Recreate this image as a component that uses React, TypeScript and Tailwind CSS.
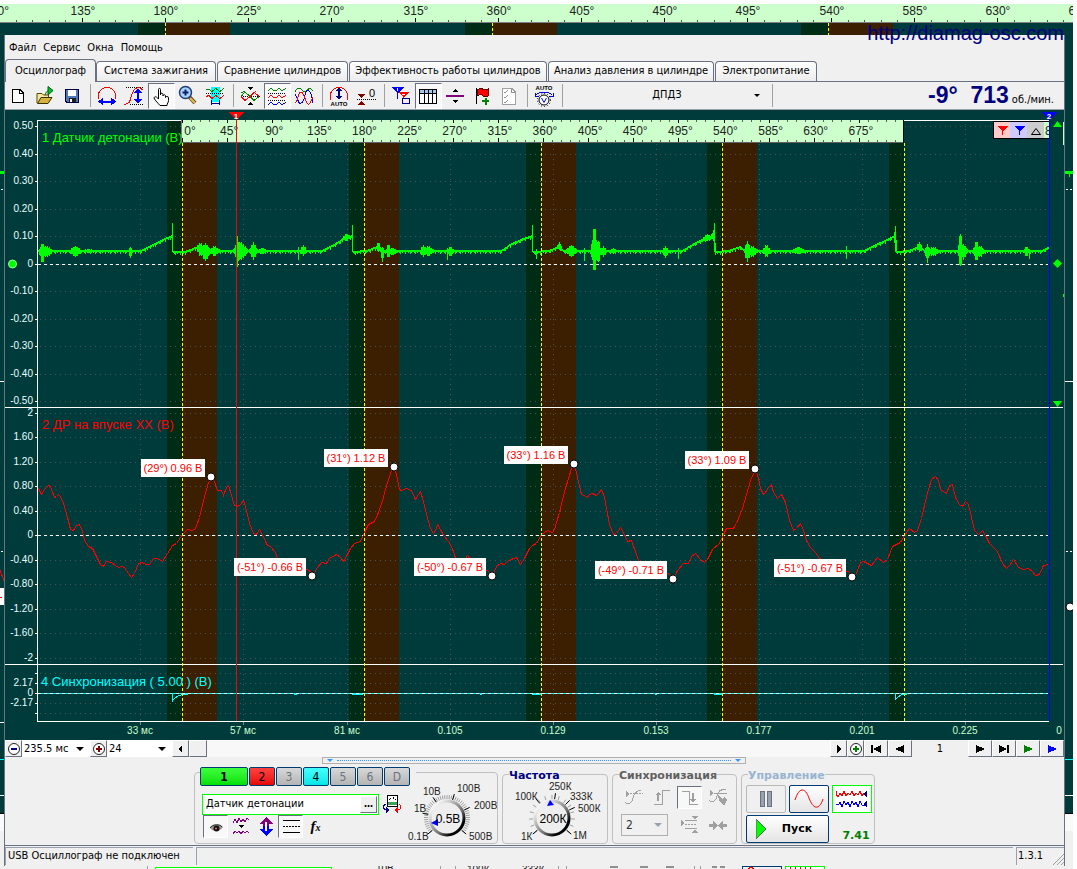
import React from 'react';

type Point = [number, number];

const BANDS = [182, 364, 541, 722, 904];
const GRID_X = [140, 243, 347, 450, 553, 656, 759, 862, 965];
const TIME_LABELS = ['33 мс', '57 мс', '81 мс', '0.105', '0.129', '0.153', '0.177', '0.201', '0.225'];

const AXIS_1: [string, number][] = [
  ['0.50', 126], ['0.40', 154], ['0.30', 181], ['0.20', 209], ['0.10', 236], ['0', 264],
  ['-0.10', 291], ['-0.20', 319], ['-0.30', 346], ['-0.40', 374], ['-0.50', 401],
];
const AXIS_2: [string, number][] = [
  ['2', 413], ['1.60', 437], ['1.20', 462], ['0.80', 486], ['0.40', 511], ['0', 535],
  ['-0.40', 560], ['-0.80', 584], ['-1.20', 609], ['-1.60', 633], ['-2', 658],
];
const AXIS_3: [string, number][] = [['', 673], ['2.17', 683], ['0', 693], ['-2.17', 703], ['', 713]];

const MARKERS = [
  { x: 211, y: 477, lx: 141, ly: 459, w: 64, text: '(29°) 0.96 В' },
  { x: 312, y: 576, lx: 234, ly: 558, w: 72, text: '(-51°) -0.66 В' },
  { x: 394, y: 467, lx: 324, ly: 449, w: 64, text: '(31°) 1.12 В' },
  { x: 492, y: 576, lx: 414, ly: 558, w: 72, text: '(-50°) -0.67 В' },
  { x: 574, y: 464, lx: 504, ly: 446, w: 64, text: '(33°) 1.16 В' },
  { x: 673, y: 579, lx: 595, ly: 561, w: 72, text: '(-49°) -0.71 В' },
  { x: 755, y: 469, lx: 685, ly: 451, w: 64, text: '(33°) 1.09 В' },
  { x: 852, y: 577, lx: 774, ly: 559, w: 72, text: '(-51°) -0.67 В' },
];

// centre line of the knock sensor signal
const KNOCK: Point[] = [
  [38, 251], [141, 251], [152, 245], [162, 240], [172, 236], [173, 252], [184, 252], [198, 247], [203, 251],
  [322, 251], [335, 244], [345, 238], [352, 236], [353, 252], [366, 251], [377, 247], [382, 251],
  [501, 251], [511, 244], [523, 239], [532, 236], [533, 252], [548, 251], [559, 247], [563, 251],
  [682, 251], [697, 242], [714, 236], [715, 252], [728, 251], [740, 247], [744, 251],
  [863, 251], [880, 243], [895, 236], [896, 252], [908, 251], [919, 247], [924, 251], [1041, 251], [1048, 248],
];

// [x, top, bottom, half width]
const BURSTS: [number, number, number, number][] = [
  [42, 243, 263, 4], [46, 246, 257, 8], [75, 246, 257, 7], [88, 249, 253, 9], [130, 246, 259, 2],
  [172, 223, 252, 1], [200, 243, 256, 5], [205, 243, 261, 6], [214, 246, 256, 7],
  [237, 236, 267, 3], [240, 242, 260, 9], [253, 242, 260, 5], [262, 248, 254, 8], [298, 247, 260, 1], [303, 245, 256, 4],
  [346, 234, 241, 6], [352, 225, 252, 1], [378, 242, 252, 3], [382, 246, 263, 2], [388, 244, 258, 3], [392, 248, 255, 8],
  [423, 245, 257, 4], [428, 246, 256, 7], [447, 248, 260, 1], [450, 247, 256, 5], [532, 225, 252, 1], [536, 249, 259, 1],
  [559, 242, 250, 3], [571, 245, 257, 7], [584, 248, 261, 1], [594, 227, 272, 4], [598, 240, 263, 3], [603, 246, 257, 4],
  [613, 248, 254, 6], [665, 246, 258, 4], [678, 248, 259, 1], [707, 234, 241, 7], [713, 230, 241, 3], [714, 223, 252, 1],
  [747, 241, 262, 4], [752, 246, 257, 7], [766, 245, 257, 5], [798, 247, 254, 9], [846, 246, 259, 1],
  [895, 226, 252, 2], [919, 242, 252, 4], [927, 244, 263, 3], [933, 247, 256, 8],
  [960, 232, 268, 3], [963, 244, 260, 5], [976, 241, 261, 4], [980, 246, 257, 5], [1026, 246, 256, 4], [1029, 249, 259, 1],
];

const PRESSURE: Point[] = [
  [38, 488], [41, 494], [44, 489], [48, 485], [50, 486], [54, 497], [56, 496], [58, 494], [60, 496], [63, 503], [67, 517], [70, 529],
  [73, 530], [76, 525], [79, 524], [82, 531], [84, 540], [88, 546], [92, 548], [97, 558], [100, 564], [103, 566],
  [106, 561], [111, 562], [115, 565], [118, 567], [121, 566], [124, 567], [128, 573], [131, 577], [134, 573],
  [138, 563], [142, 562], [145, 564], [149, 564], [153, 558], [157, 558], [162, 561], [167, 553], [172, 545],
  [176, 543], [182, 534], [187, 529], [192, 530], [195, 528], [199, 517], [203, 500], [208, 482], [211, 477],
  [214, 481], [217, 490], [221, 490], [223, 495], [226, 487], [228, 485], [231, 495], [234, 505], [237, 506],
  [240, 504], [243, 500], [245, 506], [249, 523], [253, 533], [256, 534], [259, 529], [261, 532], [265, 541],
  [267, 545], [270, 546], [275, 552], [277, 558], [290, 563], [300, 567], [309, 570], [312, 576], [317, 567],
  [321, 562], [326, 563], [329, 558], [336, 554], [340, 557], [343, 561], [346, 556], [350, 548], [354, 543],
  [360, 541], [365, 530], [368, 524], [374, 521], [378, 512], [382, 500], [387, 482], [391, 470], [394, 467],
  [396, 474], [399, 489], [401, 490], [406, 488], [411, 490], [415, 499], [418, 494], [420, 491], [423, 501],
  [426, 514], [430, 528], [433, 533], [435, 530], [437, 524], [440, 529], [443, 535], [448, 541], [451, 546],
  [454, 554], [455, 558], [463, 562], [467, 555], [471, 560], [480, 566], [488, 571], [492, 576], [496, 566],
  [500, 563], [504, 564], [508, 560], [516, 557], [520, 564], [524, 558], [529, 548], [532, 545], [536, 543],
  [541, 534], [547, 530], [552, 532], [554, 529], [559, 512], [565, 488], [571, 468], [574, 464], [577, 477],
  [581, 494], [584, 495], [587, 497], [589, 494], [592, 493], [596, 495], [598, 493], [601, 489], [604, 497],
  [609, 524], [613, 534], [616, 533], [620, 527], [623, 532], [627, 541], [631, 540], [635, 551], [638, 560],
  [646, 566], [650, 561], [660, 570], [668, 573], [673, 579], [677, 570], [683, 563], [688, 563], [691, 556],
  [695, 553], [700, 559], [704, 562], [707, 559], [712, 549], [719, 543], [723, 534], [726, 528], [733, 528],
  [736, 523], [742, 508], [750, 480], [755, 469], [758, 478], [760, 488], [763, 494], [765, 492], [768, 487],
  [771, 484], [773, 492], [777, 498], [781, 494], [785, 502], [789, 520], [793, 530], [796, 528], [800, 523],
  [803, 530], [806, 540], [810, 547], [815, 552], [819, 558], [830, 564], [840, 570], [848, 571], [852, 577],
  [856, 573], [860, 562], [863, 561], [871, 565], [877, 557], [883, 562], [887, 559], [892, 546], [900, 542],
  [904, 535], [909, 528], [914, 532], [917, 530], [921, 518], [926, 496], [931, 479], [935, 476], [938, 480],
  [940, 489], [946, 493], [949, 485], [952, 484], [955, 497], [959, 504], [962, 506], [965, 501], [968, 504],
  [971, 517], [974, 530], [978, 534], [982, 530], [985, 535], [989, 543], [997, 551], [1002, 563], [1006, 568],
  [1010, 564], [1013, 559], [1018, 567], [1023, 569], [1028, 568], [1032, 571], [1035, 575], [1039, 574],
  [1043, 565], [1048, 564],
];

const centreAt = (x: number) => {
  for (let i = 1; i < KNOCK.length; i++) {
    const [x1, y1] = KNOCK[i];
    if (x <= x1) {
      const [x0, y0] = KNOCK[i - 1];
      return y0 + ((y1 - y0) * (x - x0)) / (x1 - x0);
    }
  }
  return 251;
};

const knockPath = () => {
  let d = '';
  for (let x = 38; x <= 1048; x++) {
    const c = centreAt(x);
    let top = c - 1;
    let bottom = c + 1 + (x % 5 === 0 ? 2 : x % 3 === 0 ? 1 : 0);
    BURSTS.forEach(([bx, t, b, w]) => {
      const k = 1 - Math.abs(x - bx) / w;
      if (k <= 0) return;
      const soft = Math.min(1, k * (x % 2 ? 1.2 : 0.9));
      top = Math.min(top, c - (c - t) * (w === 1 ? 1 : soft));
      bottom = Math.max(bottom, c + (b - c) * (w === 1 ? 1 : soft));
    });
    d += `M${x} ${Math.round(top)}h1V${Math.round(bottom)}h-1z`;
  }
  return d;
};

const toLine = (pts: Point[]) => pts.map(([x, y]) => `${x + 0.5},${y + 0.5}`).join(' ');

/* ---------- other copy of the program behind the window ---------- */

const Backdrop = () => {
  const labels = [90, 135, 180, 225, 270, 315, 360, 405, 450, 495, 540, 585, 630, 675];
  return (
    <svg viewBox="0 4 1073 865" className="absolute inset-x-0 top-0 w-full" shapeRendering="crispEdges" aria-hidden="true">
      <rect x="0" y="4" width="1073" height="865" fill="#f0f0f0" />
      <rect x="0" y="22" width="1073" height="792" fill="#003b3b" />
      <rect x="0" y="814" width="1073" height="17" fill="#fafafa" />
      <rect x="0" y="4" width="1073" height="18" fill="#ccffcc" />
      {[165, 492, 828].map((x) => (
        <g key={x}>
          <rect x={x - 27} y="23" width="27" height="13" fill="#002b14" />
          <rect x={x} y="23" width="65" height="13" fill="#3c1e00" />
          <path d={`M${x + 0.5} 23V36`} stroke="#ffff00" strokeDasharray="3 2" />
        </g>
      ))}
      <rect x="0" y="22" width="1073" height="1" fill="#808080" />
      {labels.map((deg, i) => {
        const x = Math.round(-1.5 + i * 83.2);
        return (
          <g key={deg}>
            <path d={`M${x + 0.5} 18V22`} stroke="#000" />
            {[1, 2, 3, 4].map((n) => (
              <path key={n} d={`M${Math.round(x + n * 16.6) + 0.5} 20V22`} stroke="#555" />
            ))}
            <text x={x + 1} y="15" fontSize="12" textAnchor="middle" fill="#222">{deg}°</text>
          </g>
        );
      })}
      <g fill="#00ff00">
        <rect x="0" y="171" width="4" height="3" />
        <rect x="1065" y="171" width="8" height="3" />
        <rect x="1069" y="174" width="1" height="3" />
      </g>
      <g fill="#fff">
        <rect x="1" y="189" width="2" height="1" />
        <rect x="1066" y="189" width="2" height="1" />
        <rect x="1070" y="189" width="2" height="1" />
        <rect x="0" y="381" width="4" height="1" />
        <rect x="1065" y="381" width="8" height="1" />
        <rect x="1" y="551" width="2" height="1" />
        <rect x="1066" y="551" width="2" height="1" />
        <rect x="1070" y="551" width="2" height="1" />
        <rect x="0" y="588" width="4" height="17" />
        <rect x="0" y="722" width="4" height="1" />
        <rect x="0" y="795" width="4" height="1" />
        <rect x="1065" y="795" width="8" height="1" />
      </g>
      <path d="M0 570L4 581M0 597.5H2" stroke="#f00" fill="none" />
      <rect x="0" y="759" width="4" height="1" fill="#00ffff" />
      <rect x="1065" y="759" width="8" height="1" fill="#00ffff" />
      <rect x="0" y="813" width="4" height="1" fill="#000" />
      <rect x="1065" y="813" width="8" height="1" fill="#000" />
      <circle cx="1070" cy="607" r="4" fill="#fff" stroke="#000" shapeRendering="auto" />
      <rect x="155.5" y="867.5" width="176" height="6" fill="#fff" stroke="#00ff00" />
      <path d="M147.5 866V869M440.5 866V869M455.5 866V869M558.5 866V869M566.5 866V869M694.5 866V869M700.5 866V869" stroke="#a0a0a0" />
      <path d="M742.5 869V866.5H781.5V869" stroke="#003c74" fill="none" />
      <path d="M785.5 869V866.5H824.5V869" stroke="#00ff00" fill="#fff" />
      <path d="M748 869l3-2 3 2M790 867v2m5-2v2m5-2v2m5-2v2m5-2v2" stroke="#f00" fill="none" />
      <path d="M610 867h8m22 0h8m18 0h8m38 0h5m3 0h5" stroke="#909090" strokeWidth="2" />
      <g fontSize="10" fill="#222">
        <text x="376" y="872">10В</text>
        <text x="467" y="873">100К</text>
        <text x="522" y="873">333К</text>
      </g>
    </svg>
  );
};

/* ---------- plot ---------- */

const Axis = ({ rows }: { rows: [string, number][] }) => (
  <>
    {rows.map(([label, y]) => (
      <g key={y}>
        <path d={`M35 ${y + 0.5}H38`} stroke="#fff" />
        <text x="33" y={y + 3} fontSize="10" textAnchor="end" fill="#e8ffff">{label}</text>
      </g>
    ))}
  </>
);

const Ruler = () => {
  const step = 722 / 16;
  const ticks = Array.from({ length: 80 }, (_, i) => i);
  return (
    <g>
      <rect x="181" y="120" width="723" height="23" fill="#ccffcc" />
      <rect x="181" y="120" width="1" height="23" fill="#808080" />
      <rect x="181" y="142" width="723" height="1" fill="#606060" />
      <rect x="903" y="120" width="1" height="23" fill="#000" />
      {ticks.map((i) => {
        const x = Math.round(182 + (i * step) / 5) + 0.5;
        const major = i % 5 === 0;
        return <path key={i} d={major ? `M${x} 120v3M${x} 138v4` : `M${x} 120v2M${x} 140v2`} stroke={major ? '#000' : '#606060'} />;
      })}
      {Array.from({ length: 16 }, (_, i) => (
        <text key={i} x={i === 0 ? 190 : 184 + i * step} y="135" fontSize="12" textAnchor="middle" fill="#222">{i * 45}°</text>
      ))}
    </g>
  );
};

const Plot = () => (
  <svg viewBox="5 110 1059 630" className="block w-full bg-[#003b3b]" shapeRendering="crispEdges" role="img" aria-label="Осциллограмма">
    {BANDS.map((x, i) => (
      <g key={x}>
        <rect x={x - 15} y="121" width="15" height="600" fill="#002b14" />
        {i < 4 && <rect x={x} y="121" width="35" height="600" fill="#3c1e00" />}
      </g>
    ))}

    <g stroke="#4a5252" strokeDasharray="1 4" fill="none">
      {[...AXIS_1, ...AXIS_2, ...AXIS_3].map(([, y]) => <path key={y} d={`M40 ${y + 0.5}H1048`} />)}
      {GRID_X.map((x) => <path key={x} d={`M${x + 0.5} 124V720`} />)}
    </g>
    <g stroke="#808080">
      {GRID_X.map((x) => <path key={x} d={`M${x + 0.5} 722V725`} />)}
    </g>

    <g stroke="#fff" strokeDasharray="3 3">
      <path d="M38 264.5H1048" />
      <path d="M38 535.5H1048" />
    </g>
    <path d="M37.5 721V120.5H1049M37 721.5H1049" stroke="#fff" fill="none" />
    <path d="M5 407.5H1063M5 664.5H1063" stroke="#fff" />
    <Axis rows={AXIS_1} />
    <Axis rows={AXIS_2} />
    <Axis rows={AXIS_3} />

    <path d={knockPath()} fill="#00ff00" />
    <polyline points={toLine(PRESSURE)} fill="none" stroke="#ff0000" />
    <path d="M38 693.5H1048" stroke="#00ffff" />
    <path d="M38 693.5H1048" stroke="#fff" strokeDasharray="3 3" />
    <path
      d="M172.5 693V701L174 699L177 696.5L182 694.5H188M352 694.5H363M294 694.5h3M532 694.5H541M714 694.5H723M895.5 693V699L898 697L902 694.5H907M480 694.5h2M655 694.5h2"
      stroke="#00ffff" fill="none"
    />

    {BANDS.map((x) => <path key={x} d={`M${x + 0.5} 143V721`} stroke="#ffff00" strokeDasharray="3 2" />)}

    <text x="42" y="142" fontSize="13" fill="#00ff00">1 Датчик детонации (В)</text>
    <text x="42" y="429" fontSize="13" fill="#ff0000">2 ДР на впуске ХХ (В)</text>
    <text x="41" y="686" fontSize="13" fill="#00ffff">4 Синхронизация ( 5.00 ) (В)</text>

    <Ruler />

    <path d="M236.5 119V721" stroke="#ff0000" />
    <path d="M229 112H244L236.5 120Z" fill="#ff0000" />
    <text x="236" y="119" fontSize="8" fontWeight="bold" textAnchor="middle" fill="#fff">1</text>

    <rect x="993.5" y="121.5" width="56" height="17" fill="#ccffcc" stroke="#000" />
    <rect x="994" y="122" width="16" height="16" fill="#ffcccc" />
    <rect x="1010" y="122" width="17" height="16" fill="#ccccff" />
    <rect x="1027" y="122" width="17" height="16" fill="#cccccc" />
    <path d="M997 126H1008L1003 131V135H1002V131Z" fill="#ff0000" />
    <path d="M1014 126H1025L1020 131V135H1019V131Z" fill="#0000ff" />
    <path d="M1031.5 134.5H1040.5L1036 128.5Z" fill="none" stroke="#000" shapeRendering="auto" />
    <text x="1045" y="135" fontSize="12" fill="#222">8</text>
    <rect x="1050" y="121" width="13" height="18" fill="#003b3b" />
    <path d="M1049.5 119V721" stroke="#0000ff" />
    <path d="M1042 112H1057L1049.5 120Z" fill="#0000ff" />
    <text x="1049" y="119" fontSize="8" fontWeight="bold" textAnchor="middle" fill="#fff">2</text>

    <g fill="#00ff00" shapeRendering="auto">
      <path d="M1053 127H1062L1057.5 121Z" />
      <path d="M1053 401H1062L1057.5 407Z" />
      <path d="M1057.5 259L1062 263.5L1057.5 268L1053 263.5Z" />
      <circle cx="12.5" cy="264" r="4" stroke="#9f9" />
    </g>
    <rect x="1063" y="122" width="1" height="23" fill="#ccffcc" />
    <rect x="1063" y="294" width="1" height="3" fill="#00ff00" />

    {MARKERS.map((m) => (
      <g key={m.x}>
        <rect x={m.lx} y={m.ly} width={m.w} height="18" fill="#fff" />
        <text x={m.lx + m.w / 2} y={m.ly + 13} fontSize="11" textAnchor="middle" fill="#ff0000">{m.text}</text>
        <circle cx={m.x} cy={m.y} r="4" fill="#fff" stroke="#000" shapeRendering="auto" />
      </g>
    ))}

    <g fontSize="10" textAnchor="middle" fill="#ccffcc">
      {TIME_LABELS.map((t, i) => <text key={t} x={GRID_X[i]} y="734">{t}</text>)}
      <text x="1059" y="734">0</text>
    </g>
  </svg>
);

/* ---------- toolbar ---------- */

const Icon = ({ children, smooth }: { children: React.ReactNode; smooth?: boolean }) => (
  <svg viewBox="0 0 22 22" width="22" height="22" fill="none" className="shrink-0" shapeRendering={smooth ? 'auto' : 'crispEdges'} aria-hidden="true">
    {children}
  </svg>
);

const ToolButton = ({ label, pressed, children }: { label: string; pressed?: boolean; children: React.ReactNode }) => (
  <button
    type="button"
    aria-label={label}
    className={`flex h-[26px] w-[27px] shrink-0 items-center justify-center border pr-px ${
      pressed ? 'border-t-gray-500 border-l-gray-500 border-r-white border-b-white bg-[#f8f8f8]' : 'border-transparent'
    }`}
  >
    {children}
  </button>
);

const Separator = () => (
  <span className="flex w-2 shrink-0 justify-center">
    <span className="h-[23px] w-px bg-[#a0a0a0]" />
  </span>
);

const Toolbar = () => (
  <div className="flex h-7 items-center border-b border-gray-400 bg-[#f0f0f0]">
    <ToolButton label="Новый">
      <Icon><path d="M5.5 4.5H13L16.5 8V17.5H5.5Z" fill="#fff" stroke="#000" /><path d="M12.5 5V8.5H16" stroke="#000" /></Icon>
    </ToolButton>
    <ToolButton label="Открыть">
      <Icon smooth>
        <path d="M3 18V8.5H8L9.5 10H14.5V12" fill="#f5e6a0" stroke="#5a4a00" />
        <path d="M3.5 18.5L7 12.5H18L14 18.5Z" fill="#d8b040" stroke="#3a3000" />
        <path d="M14 1.5V10L19 5.5Z" fill="#00c030" stroke="#006000" />
        <path d="M11 10C12 7 13 6 14 6" stroke="#006000" />
      </Icon>
    </ToolButton>
    <ToolButton label="Сохранить">
      <Icon>
        <path d="M4.5 4.5H17.5V17.5H6L4.5 16Z" fill="#5078b8" stroke="#000040" />
        <rect x="7" y="5" width="8" height="6" fill="#fff" />
        <rect x="8" y="13" width="7" height="4" fill="#202020" />
        <rect x="9" y="14" width="2" height="3" fill="#fff" />
      </Icon>
    </ToolButton>
    <Separator />
    <ToolButton label="Период">
      <Icon>
        <path d="M2.5 14V9C3 5 7 2.5 11 2.5S19 5 19.5 9V14" stroke="#f00" />
        <path d="M6 16.5H16" stroke="#0000ff" strokeWidth="2" />
        <path d="M2 16.5L7 12.5V20.5ZM20 16.5L15 12.5V20.5Z" fill="#0000ff" />
      </Icon>
    </ToolButton>
    <ToolButton label="Амплитуда">
      <Icon>
        <path d="M3 2.5H20M7 19.5H20" stroke="#000" strokeDasharray="1 1" />
        <path d="M1 19.5C8 19 7 14 9 9S12 3 16 2.5L20 5" stroke="#f00" />
        <path d="M15 6V16" stroke="#0000ff" strokeWidth="2" />
        <path d="M15 3L19 8H11ZM15 19L19 14H11Z" fill="#0000ff" />
      </Icon>
    </ToolButton>
    <ToolButton label="Рука" pressed>
      <Icon smooth>
        <path
          d="M8.5 14V4.5C8.500 3 10.5 3 10.5 4.5V10V9C11 7.5 13 8 13 9.5V11C13.5 9 15.5 9.5 15.5 11V12.5C16 11 18.5 11 18.5 13V15.5C18.5 18 17 18 17 20.5H10C8 18 5.5 16 4 13C4.5 11 6.5 11.5 8.5 14"
          fill="#fff" stroke="#000"
        />
      </Icon>
    </ToolButton>
    <ToolButton label="Масштаб">
      <Icon smooth>
        <path d="M12.5 12L18 18" stroke="#6a4a10" strokeWidth="4" />
        <path d="M13 13L18 18" stroke="#e0c060" strokeWidth="2" />
        <circle cx="8.5" cy="7.5" r="6" fill="#a8d4ff" stroke="#203c70" strokeWidth="1.5" />
        <path d="M8.5 4.5V10.5M5.5 7.5H11.5" stroke="#102060" strokeWidth="2" />
      </Icon>
    </ToolButton>
    <ToolButton label="Участок">
      <Icon>
        <rect x="7" y="2" width="9" height="15" fill="#00ffff" />
        <path d="M2 4.5H5L8 6.5L12 3.5L16 6.5L20 3.5" stroke="#008000" />
        <path d="M2 8.5H20" stroke="#000" strokeDasharray="1 1" />
        <path d="M2 11.5L5 10.5L8 13.5L12 10.5L16 13.5L20 10.5" stroke="#f00" />
        <path d="M7.5 15V20M15.5 15V20M8 18.5H15" stroke="#000080" />
      </Icon>
    </ToolButton>
    <Separator />
    <ToolButton label="Совместить">
      <Icon>
        <path d="M8 2H14L11 5ZM8 20H14L11 17Z" fill="#000" />
        <path d="M2 11.5H21" stroke="#000" strokeDasharray="1 1" />
        <path d="M2 11.5L6 7L11 11.5L15 15.5L20 11.5M2 8L5 6.500L11 11.5" stroke="#008000" />
        <path d="M2 11.5L6 15.5L11 11.5L15 7L20 11.5M11 11.5L17 6" stroke="#f00" />
      </Icon>
    </ToolButton>
    <ToolButton label="Разнести" pressed>
      <Icon>
        <path d="M2 5.5L5 3.5L8 5.5H10L13 3.5L16 5.5L20 3.5" stroke="#008000" />
        <path d="M2 8.5H20M2 15.5H20" stroke="#000" strokeDasharray="1 1" />
        <path d="M2 12.5L5 10.5L8 12.5H10L13 10.5L16 12.5L20 10.5" stroke="#f00" />
        <path d="M2 19.5L5 17.5L8 19.5H10L13 17.5L16 19.5L20 17.5" stroke="#00f" />
      </Icon>
    </ToolButton>
    <ToolButton label="Наложить">
      <Icon>
        <path d="M2 6.5C5 1 7 3 10 6S15 3 17 3L20 6" stroke="#008000" />
        <path d="M2 9L6 17.5C8 20 11 16 12 10S16 4 18 9S19 17 20 18" stroke="#00f" />
        <path d="M2 18C5 16 5 7 8 7S12 15 14 18S18 17 20 12" stroke="#f00" />
      </Icon>
    </ToolButton>
    <Separator />
    <ToolButton label="Авто">
      <Icon>
        <path d="M2.5 15V9C3 5 7 2.5 11 2.5S19 5 19.5 9V15" stroke="#f00" />
        <path d="M11 5V13" stroke="#000080" strokeWidth="2" />
        <path d="M11 2L14 6H8ZM11 15L14 11H8Z" fill="#000080" />
        <text x="11" y="21" fontSize="6" fontWeight="bold" textAnchor="middle" fill="#000">AUTO</text>
      </Icon>
    </ToolButton>
    <ToolButton label="Ноль">
      <Icon>
        <path d="M2 14.5H21" stroke="#000" strokeDasharray="1 1" />
        <path d="M3 9H10L6.5 13ZM3 20H10L6.5 16Z" fill="#800000" />
        <text x="17" y="12" fontSize="11" textAnchor="middle" fill="#000">0</text>
      </Icon>
    </ToolButton>
    <Separator />
    <ToolButton label="Маркеры">
      <Icon>
        <path d="M1 2H14L8 8V14H7V8Z" fill="#00f" />
        <path d="M8 7H19L14 12V18H13V12Z" fill="#f00" />
        <path d="M7.5 3V6M12 9.500H15" stroke="#fff" />
        <rect x="12.5" y="13.5" width="7" height="5" fill="#eef" stroke="#000080" />
      </Icon>
    </ToolButton>
    <ToolButton label="Таблица" pressed>
      <Icon>
        <rect x="2.5" y="4.5" width="17" height="14" fill="#fff" stroke="#000" />
        <rect x="3" y="5" width="16" height="3" fill="#a0c8f0" />
        <path d="M3 8.5H19M7.5 5V18M11.5 5V18M15.5 5V18" stroke="#000" />
      </Icon>
    </ToolButton>
    <ToolButton label="Делитель">
      <Icon><path d="M2 11H20" stroke="#800080" strokeWidth="2" /><path d="M8 7H14L11 4ZM8 15H14L11 18Z" fill="#000" /></Icon>
    </ToolButton>
    <ToolButton label="Флажок">
      <Icon>
        <path d="M5.5 3V19" stroke="#000" />
        <path d="M6 5L10 3L13 5L17 4V11L13 12L10 9L6 11Z" fill="#f00" stroke="#600000" />
        <path d="M11 16H18M14.5 13V20" stroke="#008000" strokeWidth="2" />
      </Icon>
    </ToolButton>
    <ToolButton label="Список">
      <Icon>
        <path d="M4.5 3.5H14L17.5 7V19.5H4.5Z" fill="#fff" stroke="#a0a0a0" />
        <path d="M13.5 4V7.5H17M6 7l1 1 3-3M6 12l1 1 3-3M6 17l1 1 3-3" stroke="#909090" />
      </Icon>
    </ToolButton>
    <Separator />
    <ToolButton label="Авторежим">
      <Icon>
        <text x="11" y="5" fontSize="6" fontWeight="bold" textAnchor="middle" fill="#000">AUTO</text>
        <path d="M3 10C7 6 15 6 19 10M2 8V11H6M20 8V11H16" stroke="#0000e0" />
        <g shapeRendering="auto">
          <circle cx="11" cy="15" r="5" fill="#fff" stroke="#000" />
          <circle cx="11" cy="15" r="6.5" stroke="#000" strokeDasharray="1 2" />
          <path d="M8.5 13L11 17.5L13.5 13" stroke="#00f" />
        </g>
      </Icon>
    </ToolButton>
    <Separator />
    <div className="relative flex w-[202px] shrink-0 items-center">
      <select aria-label="Датчик" className="h-6 w-full appearance-none bg-transparent text-center text-[11px]" defaultValue="ДПДЗ">
        <option>ДПДЗ</option>
      </select>
      <span className="pointer-events-none absolute right-2 border-x-[3px] border-t-[3px] border-x-transparent border-t-black" />
    </div>
    <Separator />
    <div className="ml-auto flex items-baseline pr-[10px] whitespace-pre">
      <span className="font-[family-name:'Liberation_Sans',sans-serif] text-[23px] leading-6 font-bold text-[#000080]">-9°  713</span>
      <span className="ml-[3px] text-[11px]">об./мин.</span>
    </div>
  </div>
);

/* ---------- scroll row ---------- */

const NavButton = ({ label, className = '', children }: { label: string; className?: string; children?: React.ReactNode }) => (
  <button
    type="button"
    aria-label={label}
    className={`flex h-[17px] shrink-0 items-center justify-center border border-t-white border-l-white border-r-gray-500 border-b-gray-500 bg-[#f0f0f0] ${className}`}
  >
    {children}
  </button>
);

const Glyph = ({ d, fill = '#000', w = 12 }: { d: string; fill?: string; w?: number }) => (
  <svg viewBox={`0 0 ${w} 10`} width={w} height="10" fill={fill} shapeRendering="crispEdges" aria-hidden="true">
    <path d={d} />
  </svg>
);

const ZoomSign = ({ color, plus }: { color: string; plus?: boolean }) => (
  <svg viewBox="0 0 14 14" width="14" height="14" fill="none" aria-hidden="true" className="shrink-0">
    <circle cx="7" cy="7" r="5.5" fill="#fff" stroke="#222" />
    <path d={plus ? 'M4 7H10M7 4V10' : 'M4 7H10'} stroke={color} strokeWidth="2" />
  </svg>
);

const SmallSelect = ({ label, value, className }: { label: string; value: string; className: string }) => (
  <div className={`relative flex h-[17px] shrink-0 items-center bg-white ${className}`}>
    <select aria-label={label} defaultValue={value} className="w-full appearance-none pl-0.5 text-[11px] leading-4">
      <option>{value}</option>
    </select>
    <span className="pointer-events-none absolute right-[6px] border-x-4 border-t-4 border-x-transparent border-t-black" />
  </div>
);

const ScrollRow = () => (
  <div className="flex h-[17px] items-center bg-[#f8f8f8]">
    <NavButton label="Уменьшить" className="w-[17px]"><ZoomSign color="#000080" /></NavButton>
    <SmallSelect label="Длительность" value="235.5 мс" className="w-[68px]" />
    <NavButton label="Увеличить" className="w-[17px]"><ZoomSign color="#800000" plus /></NavButton>
    <SmallSelect label="Делений" value="24" className="w-[65px]" />
    <NavButton label="Влево" className="w-[17px]"><Glyph w={5} d="M4 1V9L0 5Z" /></NavButton>
    <NavButton label="Ползунок" className="w-[18px]" />
    <span className="flex-1" />
    <NavButton label="Вправо" className="w-[17px]"><Glyph w={5} d="M1 1V9L5 5Z" /></NavButton>
    <NavButton label="Добавить кадр" className="w-[17px]"><ZoomSign color="#008000" plus /></NavButton>
    <NavButton label="Первый" className="w-6"><Glyph d="M1 1H3V9H1ZM11 1V9L4 5.5V4.5Z" /></NavButton>
    <NavButton label="Предыдущий" className="w-6"><Glyph d="M10 1V9L2 5.5V4.5Z" /></NavButton>
    <span className="h-[17px] w-14 bg-[#f0f0f0] text-center text-[11px] leading-[18px]">1</span>
    <NavButton label="Следующий" className="w-6"><Glyph d="M2 1V9L10 5.5V4.5Z" /></NavButton>
    <NavButton label="Последний" className="w-6"><Glyph d="M1 1V9L8 5.5V4.5ZM9 1H11V9H9Z" /></NavButton>
    <NavButton label="Воспроизвести" className="w-6"><Glyph fill="#008000" d="M2 1V9L10 5.5V4.5Z" /></NavButton>
    <NavButton label="Вперёд" className="w-6"><Glyph fill="#0000ff" d="M2 1V9L10 5.5V4.5Z" /></NavButton>
  </div>
);

/* ---------- bottom panel ---------- */

const CHANNELS = [
  { id: '1', style: 'w-12 bg-linear-to-b from-[#3cff3c] to-[#00e000] text-black font-bold' },
  { id: '2', style: 'w-[26px] bg-linear-to-b from-[#ff4040] to-[#e60000] text-black' },
  { id: '3', style: 'w-[26px] bg-linear-to-b from-[#d8d8d8] to-[#b4b4b4] text-gray-500' },
  { id: '4', style: 'w-[26px] bg-linear-to-b from-[#40ffff] to-[#00e6e6] text-black' },
  { id: '5', style: 'w-[26px] bg-linear-to-b from-[#d8d8d8] to-[#b4b4b4] text-gray-500' },
  { id: '6', style: 'w-[26px] bg-linear-to-b from-[#d8d8d8] to-[#b4b4b4] text-gray-500' },
  { id: 'D', style: 'w-[26px] bg-linear-to-b from-[#d8d8d8] to-[#b4b4b4] text-gray-500' },
];

type KnobProps = {
  viewBox: string;
  cx: number;
  cy: number;
  value: string;
  pointer: string;
  dense?: boolean;
  labels: [string, number, number][];
  marks: number[];
  className: string;
};

const Knob = ({ viewBox, cx, cy, value, pointer, dense, labels, marks, className }: KnobProps) => {
  const count = dense ? 44 : 14;
  const at = (deg: number, r: number) => {
    const a = (deg * Math.PI) / 180;
    return `${(cx + r * Math.sin(a)).toFixed(1)} ${(cy - r * Math.cos(a)).toFixed(1)}`;
  };
  const id = `rim-${value}`;
  return (
    <svg viewBox={viewBox} className={className} role="img" aria-label={value}>
      <defs>
        <linearGradient id={id} x1="0" y1="0" x2="1" y2="1">
          <stop offset="0.15" stopColor="#f4f4f4" />
          <stop offset="0.6" stopColor="#707070" />
          <stop offset="0.8" stopColor="#000" />
        </linearGradient>
      </defs>
      {Array.from({ length: count + 1 }, (_, i) => {
        const deg = -130 + (260 * i) / count;
        return <path key={i} d={`M${at(deg, 19)}L${at(deg, 23)}`} stroke="#a0a0a0" />;
      })}
      {marks.map((deg) => <path key={deg} d={`M${at(deg, 19)}L${at(deg, 25)}`} stroke="#000" />)}
      <circle cx={cx} cy={cy} r="17" fill="#eeeeee" stroke={`url(#${id})`} strokeWidth="3" />
      <path d={pointer} fill="#0000ff" />
      <text x={cx + 1} y={cy + 5} fontSize="12" textAnchor="middle" fill="#000">{value}</text>
      <g fontSize="10" fill="#222">
        {labels.map(([t, x, y]) => <text key={t} x={x} y={y}>{t}</text>)}
      </g>
    </svg>
  );
};

const PanelButton = ({ label, pressed, children }: { label: string; pressed?: boolean; children: React.ReactNode }) => (
  <button
    type="button"
    aria-label={label}
    className={`flex h-[23px] w-[25px] items-center justify-center border ${
      pressed ? 'border-t-gray-500 border-l-gray-500 border-r-white border-b-white bg-[#f8f8f8]' : 'border-transparent'
    }`}
  >
    {children}
  </button>
);

const ChannelGroup = () => (
  <div className="mt-[6px] flex h-[72px] w-[304px] shrink-0 rounded border border-[#c0c0c0] pl-[5px]">
    <div className="w-[208px] shrink-0">
      <div className="-mt-[6px] flex w-[216px] gap-px bg-[#f0f0f0]">
        {CHANNELS.map((c) => (
          <button key={c.id} type="button" className={`h-[19px] shrink-0 rounded-xs border border-[#003c74] text-xs leading-4 ${c.style}`}>
            {c.id}
          </button>
        ))}
      </div>
      <div className="mt-[7px] flex items-center gap-0.5 pl-[2px]">
        <div className="flex h-[21px] w-[177px] items-center border border-[#00ff00] bg-white pr-px">
          <input aria-label="Название канала" defaultValue="Датчик детонации" className="min-w-0 flex-1 pl-[3px] text-[11px] outline-none" />
          <button type="button" className="h-[17px] w-[17px] border border-t-white border-l-white border-r-gray-500 border-b-gray-500 bg-[#f0f0f0] text-[10px] leading-[10px] font-bold">…</button>
        </div>
        <button type="button" aria-label="Обмен">
          <Icon>
            <rect x="6.5" y="2.5" width="10" height="11" fill="#fff" stroke="#000" />
            <rect x="7" y="9" width="9" height="3" fill="#40a060" />
            <path d="M8 7L10 5M12 6V4M14 7L15 6" stroke="#000" />
            <path d="M5 11C1 13 2 17 7 17" stroke="#000080" />
            <path d="M9 17L5 14V20Z" fill="#000080" />
            <path d="M18 11C21 13 21 17 16 17" stroke="#f00" />
            <path d="M13 17L17 14V20Z" fill="#f00" />
          </Icon>
        </button>
      </div>
      <div className="flex pl-[3px]">
        <PanelButton label="Показать" pressed>
          <Icon smooth>
            <path d="M5 11C8 7 15 7 18 11C15 16 8 16 5 12Z" fill="#999" />
            <path d="M5 12C8 8 15 8 17 11" stroke="#333" />
            <circle cx="11.5" cy="12.5" r="3" fill="#111" />
            <circle cx="11" cy="12.5" r="1" fill="#f66" />
          </Icon>
        </PanelButton>
        <PanelButton label="Фильтр">
          <Icon>
            <path d="M3 7L5 3L7 7L9 2L11 6L13 3L15 6L17 2L19 4" stroke="#800080" />
            <path d="M8 9H14L11 12Z" fill="#000" />
            <path d="M3 18L5 15L7 17L9 15L11 18L13 15L15 17L17 15L19 17" stroke="#800080" />
          </Icon>
        </PanelButton>
        <PanelButton label="Сдвиг">
          <Icon>
            <path d="M11 1L18 8H14V11H8V8H4Z" fill="#800080" />
            <path d="M11 20L18 13H14V10H8V13H4Z" fill="#0000ff" />
            <path d="M11 6V15" stroke="#fff" strokeWidth="2" />
          </Icon>
        </PanelButton>
        <PanelButton label="Линии" pressed>
          <Icon>
            <path d="M3 4.5H20M3 16.5H20" stroke="#000" />
            <path d="M3 10.5H20" stroke="#000" strokeDasharray="2 1" />
          </Icon>
        </PanelButton>
        <button type="button" className="w-[25px] font-[family-name:'Liberation_Serif',serif] text-[15px] leading-5 font-bold italic">
          f<span className="text-[10px]">x</span>
        </button>
      </div>
    </div>
    <Knob
      className="mt-2 h-[63px] w-[89px] shrink-0"
      viewBox="408 780 89 63"
      cx={447} cy={817} value="0.5В" dense
      pointer="M431 822L438 818V825Z"
      marks={[-130, -79, -34, 17, 65, 130]}
      labels={[['0.1В', 408, 839], ['1В', 414, 811], ['10В', 423, 794], ['100В', 457, 791], ['200В', 474, 808], ['500В', 469, 839]]}
    />
  </div>
);

const Group = ({ title, color, className, children }: { title: string; color: string; className: string; children: React.ReactNode }) => (
  <fieldset className={`h-[78px] shrink-0 rounded border border-[#c0c0c0] ${className}`}>
    <legend className={`ml-[6px] pt-1 font-[family-name:'DejaVu_Sans',sans-serif] text-[11px] leading-3 font-bold ${color}`}>{title}</legend>
    {children}
  </fieldset>
);

const SyncGroup = () => (
  <Group title="Синхронизация" color="text-[#606060]" className="w-[125px]">
    <div className="flex justify-between pt-1 pr-[6px] pl-2">
      <PanelButton label="По уровню">
        <Icon><path d="M3 4V10L7 7Z" fill="#a0a0a0" /><path d="M7 6.5H20" stroke="#a0a0a0" strokeDasharray="2 1" /><path d="M2 15C5 19 9 16 10 11S13 4 18 3" stroke="#a0a0a0" /></Icon>
      </PanelButton>
      <PanelButton label="По фронту">
        <Icon><path d="M3 17.5H11.5V3.5H19" stroke="#a0a0a0" /><path d="M4 8H10L7 5ZM6 8H8V14H6Z" fill="#a0a0a0" /></Icon>
      </PanelButton>
      <PanelButton label="По спаду" pressed>
        <Icon><path d="M3 4.5H10.5V17.5H19" stroke="#a0a0a0" /><path d="M11 12H17L14 16ZM13 6H15V12H13Z" fill="#a0a0a0" /></Icon>
      </PanelButton>
      <PanelButton label="Вручную">
        <Icon><path d="M3 3V9L7 6Z" fill="#a0a0a0" /><path d="M2 13C5 17 9 14 10 9S14 2 19 2M7 6.5H20" stroke="#a0a0a0" /><path d="M11 8L15 12L18 10L20 13L17 19L12 14Z" fill="#a0a0a0" /></Icon>
      </PanelButton>
    </div>
    <div className="flex items-center pt-1 pl-2">
      <div className="relative flex items-center">
        <select aria-label="Канал синхронизации" defaultValue="2" className="h-[22px] w-[47px] appearance-none border border-[#b0b0b0] pl-1 text-xs text-[#333]">
          <option>2</option>
        </select>
        <span className="pointer-events-none absolute right-[6px] border-x-4 border-t-4 border-x-transparent border-t-gray-400" />
      </div>
      <span className="w-2" />
      <PanelButton label="Диапазон">
        <Icon><path d="M3 6V12L7 9ZM14 2H20L17 6ZM14 19H20L17 15Z" fill="#a0a0a0" /><path d="M7 6.5H19M7 14.5H19" stroke="#a0a0a0" /><path d="M7 10.5H19" stroke="#a0a0a0" strokeDasharray="2 1" /></Icon>
      </PanelButton>
      <span className="w-1" />
      <PanelButton label="Сжать">
        <Icon><path d="M2 10H6V7L11 11.5L6 16V13H2ZM20 10H16V7L11 11.5L16 16V13H20Z" fill="#a0a0a0" /></Icon>
      </PanelButton>
    </div>
  </Group>
);

const ControlGroup = () => (
  <Group title="Управление" color="text-[#99b4d1]" className="w-[134px]">
    <div className="grid grid-cols-[40px_40px_40px] gap-x-[3px] gap-y-[2px] pt-[3px] pl-1">
      <button type="button" aria-label="Пауза" className="flex h-7 items-center justify-center gap-[2px] rounded-xs border border-[#b8b8b8]">
        <span className="h-4 w-[5px] border border-gray-500 bg-gray-400" />
        <span className="h-4 w-[5px] border border-gray-500 bg-gray-400" />
      </button>
      <button type="button" aria-label="Один период" className="flex h-7 items-center justify-center rounded-xs border border-[#003c74] bg-linear-to-b from-white to-[#e4e4e4]">
        <svg viewBox="0 0 30 20" width="30" height="20" fill="none"><path d="M1 11C5 -2 11 -2 15 9S25 22 29 10" stroke="#f00" /></svg>
      </button>
      <button type="button" aria-label="Поток" className="flex h-7 items-center justify-center border border-[#00ff00] bg-white">
        <svg viewBox="0 0 34 20" width="34" height="20" fill="none" shapeRendering="crispEdges">
          <path d="M1 2V5L3 8L5 4L7 7L9 2L11 7L13 4L15 6L17 2L19 7L21 4L23 6L25 2L27 7L29 4H31" stroke="#f00" />
          <path d="M1 15H4L5 13L7 18L9 12L11 16L13 13L15 18L17 12L19 16L21 13L23 18L25 12L27 16H31" stroke="#00f" />
          <path d="M32 2V8L28 5ZM32 12V18L28 15Z" fill="#000080" />
        </svg>
      </button>
      <button type="button" className="col-span-2 flex h-7 items-center rounded-xs border border-[#003c74] bg-linear-to-b from-white to-[#e4e4e4] pl-[9px]">
        <svg viewBox="0 0 10 20" width="10" height="20"><path d="M0 0V20L10 10Z" fill="#00ff00" stroke="#606060" /></svg>
        <span className="flex-1 text-center font-[family-name:'DejaVu_Sans',sans-serif] text-[11px] font-bold">Пуск</span>
      </button>
      <span className="self-end pb-px pl-2 text-center font-[family-name:'DejaVu_Sans',sans-serif] text-[11px] leading-3 font-bold text-[#008000]">7.41</span>
    </div>
  </Group>
);

const TABS = [
  { label: 'Система зажигания', w: 'w-[120px]' },
  { label: 'Сравнение цилиндров', w: 'w-[131px]' },
  { label: 'Эффективность работы цилиндров', w: 'w-[198px]' },
  { label: 'Анализ давления в цилиндре', w: 'w-[166px]' },
  { label: 'Электропитание', w: 'w-[102px]' },
];

const App = () => (
  <div className="min-h-screen bg-white pt-1 pr-1 font-[family-name:'DejaVu_Sans_Condensed','Noto_Sans',sans-serif] text-[11px] text-black">
    <div className="relative overflow-hidden pb-1 [&_svg_text]:font-[family-name:'Liberation_Sans',sans-serif]">
      <Backdrop />
      <main className="relative mt-[31px] mr-2 ml-1 border-x border-gray-500 bg-[#f0f0f0]">
        <a href="http://diamag-osc.com" className="absolute -top-3.5 right-0 font-[family-name:'Liberation_Sans',sans-serif] text-xl leading-6 text-[#000080]">
          http://diamag-osc.com
        </a>

        <nav className="flex h-6 items-center gap-[7px] pt-[3px] pl-1">
          {['Файл', 'Сервис', 'Окна', 'Помощь'].map((m) => <button key={m} type="button">{m}</button>)}
        </nav>

        <div className="flex h-[23px] items-end border-b border-gray-500 whitespace-nowrap">
          <button type="button" className="-mb-px h-[23px] w-[91px] shrink-0 rounded-t border border-b-0 border-gray-500 bg-[#f0f0f0]">Осциллограф</button>
          <div className="flex gap-px">
            {TABS.map((t) => (
              <button key={t.label} type="button" className={`h-5 shrink-0 rounded-t border border-b-0 border-gray-500 bg-linear-to-b from-white to-[#ececec] ${t.w}`}>
                {t.label}
              </button>
            ))}
          </div>
        </div>

        <Toolbar />
        <Plot />
        <ScrollRow />

        <div className="mr-[318px] ml-[317px] flex h-[7px] items-center gap-1 border border-[#b0b0b0] px-1">
          <span className="border-x-[3px] border-t-[3px] border-x-transparent border-t-[#3399ff]" />
          <span className="h-px flex-1 border-t border-dotted border-[#3399ff]" />
          <span className="border-x-[3px] border-t-[3px] border-x-transparent border-t-[#3399ff]" />
        </div>

        <div className="flex gap-1 border-b border-gray-500 pt-[2px] pb-[1px] pl-[189px]">
          <ChannelGroup />
          <Group title="Частота" color="text-[#000080]" className="w-[106px]">
            <Knob
              className="-mt-0.5 h-[63px] w-[103px]"
              viewBox="503 779 103 63"
              cx={552} cy={817} value="200К"
              pointer="M547 805L550 799L554 804Z"
              marks={[-130, -40, 8, 45, 65, 130]}
              labels={[['1К', 521, 839], ['100К', 515, 799], ['250К', 549, 789], ['333К', 570, 799], ['500К', 578, 811], ['1М', 573, 838]]}
            />
          </Group>
          <SyncGroup />
          <ControlGroup />
        </div>

        <footer className="flex h-5 items-stretch gap-[3px] pt-px pb-px leading-4">
          <span className="w-[188px] border-t border-l border-gray-400 pl-[2px]">USB Осциллограф не подключен</span>
          <span className="flex-1 border-t border-l border-gray-400" />
          <span className="flex w-12 justify-between border-t border-l border-gray-400 pl-px">
            1.3.1
            <svg viewBox="0 0 12 12" width="12" height="12" className="self-end" aria-hidden="true">
              <path d="M1 12L12 1M5 12L12 5M9 12L12 9" stroke="#a0a0a0" />
            </svg>
          </span>
        </footer>
      </main>
    </div>
  </div>
);

export default App;
